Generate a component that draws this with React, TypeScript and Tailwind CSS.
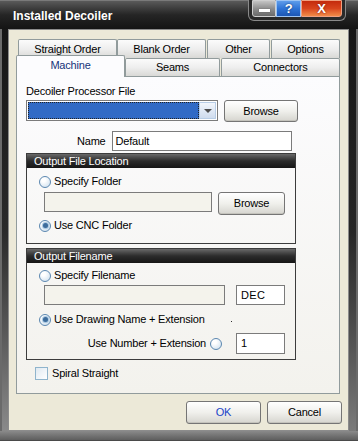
import React from "react";

function Radio({ checked = false }: { checked?: boolean }) {
  return (
    <span className="flex items-center justify-center w-[12px] h-[12px] shrink-0 rounded-full border border-[#5b87b0] bg-[radial-gradient(circle_at_35%_30%,#ffffff_20%,#c9dcec_100%)]">
      {checked && <span className="w-[5px] h-[5px] rounded-full bg-[#3d6c9c] shadow-[0_0_1px_1px_#9fc0dc]" />}
    </span>
  );
}

function Btn({ children, w, h, blue = false }: { children: React.ReactNode; w: string; h: string; blue?: boolean }) {
  return (
    <div
      className={`${w} ${h} shrink-0 flex items-center justify-center rounded-[3px] border border-[#757575] bg-linear-to-b from-[#ffffff] via-[#f0f0ec] to-[#d6d5cf] shadow-[inset_0_-1px_0_#c4c3bc] ${blue ? "text-[#1a44c8]" : "text-black"}`}
    >
      {children}
    </div>
  );
}

function Tab({ label, w, active = false }: { label: string; w: string; active?: boolean }) {
  if (active) {
    return (
      <div
        className={`${w} h-[22px] -mb-[1px] relative z-10 shrink-0 flex items-center justify-center rounded-t-[2px] border border-b-0 border-[#919b9c] bg-[#fcfcfe] text-[#15337a] pb-[2px]`}
      >
        {label}
      </div>
    );
  }
  return (
    <div
      className={`${w} h-full shrink-0 flex items-center justify-center rounded-t-[2px] border border-b-0 border-[#919b9c] bg-linear-to-b from-[#fbfbfb] via-[#eeeeee] to-[#d9d9d6] text-black`}
    >
      {label}
    </div>
  );
}

function Group({ title, h, children }: { title: string; h: string; children: React.ReactNode }) {
  return (
    <div className={`w-[270px] ${h} flex flex-col border border-[#3c3c3c]`}>
      <div className="h-[14px] shrink-0 flex items-center pl-[7px] text-white bg-linear-to-b from-[#6a6a6a] via-[#2c2c2c] to-[#161616] leading-none">
        {title}
      </div>
      {children}
    </div>
  );
}

export default function App() {
  return (
    <div className="w-[358px] h-[441px] flex flex-col overflow-hidden text-[11px] tracking-[-0.2px] font-['Liberation_Sans',Arial,sans-serif] select-none">
      {/* Title bar */}
      <div className="h-[29px] shrink-0 flex items-start bg-linear-to-b from-[#5a5a5a] via-[#252525] to-[#141414] border-t border-[#7a7a7a]">
        <div className="pl-[13px] pt-[8px] text-white font-bold text-[12px] tracking-normal leading-[15px]">
          Installed Decoiler
        </div>
        <div className="ml-auto mr-[12px] -mt-[1px] h-[21px] flex items-start px-[3px] rounded-b-[6px] bg-[#2a2a2a] border border-t-0 border-[#8a8a8a]">
          <div className="w-[24px] h-[17px] flex items-center justify-center rounded-bl-[3px] border border-[#cfcfcf] bg-linear-to-b from-[#c4c4c4] via-[#8e8e8e] to-[#6a6a6a]">
            <span className="w-[11px] h-[3px] bg-white mt-[4px] shadow-[0_0_1px_#333]" />
          </div>
          <div className="w-[25px] h-[17px] flex items-center justify-center border border-[#9cc4f4] bg-linear-to-b from-[#5e9cea] via-[#2f74d6] to-[#1c56b4] text-white font-bold text-[13px] leading-none [text-shadow:0_0_2px_#0a2a5a]">
            ?
          </div>
          <div className="w-[41px] h-[17px] flex items-center justify-center rounded-br-[3px] border border-[#f0a080] bg-linear-to-b from-[#c42a0c] via-[#d8441c] to-[#f08a48] text-white font-bold text-[13px] leading-none [text-shadow:0_0_2px_#6a1000]">
            X
          </div>
        </div>
      </div>

      {/* Middle */}
      <div className="h-[402px] shrink-0 flex">
        <div className="w-[8px] shrink-0 bg-linear-to-b from-[#161616] via-[#2a2a2a] to-[#8a8a8a] border-l-[2px] border-[#6a6a6a]" />
        {/* Client */}
        <div className="w-[341px] shrink-0 flex flex-col border border-[#8c8c8c] bg-[#ece9d8] pt-[9px]">
          {/* Tabs */}
          <div className="ml-[7px] w-[324px] flex flex-col">
            <div className="h-[19px] flex pl-[2px] gap-0">
              <Tab label="Straight Order" w="w-[99px]" />
              <Tab label="Blank Order" w="w-[89px]" />
              <div className="w-[1px]" />
              <Tab label="Other" w="w-[63px]" />
              <div className="w-[1px]" />
              <Tab label="Options" w="w-[69px]" />
            </div>
            <div className="h-[18px] flex items-end">
              <Tab label="Machine" w="w-[109px]" active />
              <Tab label="Seams" w="w-[95px]" />
              <div className="w-[1px]" />
              <Tab label="Connectors" w="w-[119px]" />
            </div>
          </div>

          {/* Panel */}
          <div className="ml-[7px] w-[324px] h-[318px] shrink-0 flex flex-col border border-[#919b9c] bg-linear-to-b from-[#fcfcfe] to-[#f3f2ed] pl-[9px] pt-[7px]">
            <div className="h-[14px] leading-[14px] text-black">Decoiler Processor File</div>
            <div className="mt-[2px] flex items-start">
              <div className="w-[192px] h-[21px] flex border border-[#7b7b7b] bg-white p-[1px]">
                <div className="flex-1 border border-dotted border-[#222] bg-[#316ac5]" />
                <div className="w-[17px] flex items-center justify-center border border-[#b8cde6] bg-linear-to-b from-[#f2f6fc] to-[#cfdcee]">
                  <span className="w-0 h-0 border-l-[4px] border-r-[4px] border-t-[4px] border-l-transparent border-r-transparent border-t-[#4d4d4d]" />
                </div>
              </div>
              <div className="ml-[6px]">
                <Btn w="w-[74px]" h="h-[22px]">Browse</Btn>
              </div>
            </div>

            <div className="mt-[9px] flex items-center h-[20px]">
              <span className="ml-[51px] text-black">Name</span>
              <div className="ml-[6px] w-[180px] h-[20px] flex items-center border border-[#7b7b7b] bg-white pl-[3px] text-black">
                Default
              </div>
            </div>

            <div className="mt-[2px]">
              <Group title="Output File Location" h="h-[91px]">
                <div className="mt-[7px] h-[13px] flex items-center pl-[12px] gap-[3px] text-black">
                  <Radio />
                  <span>Specify Folder</span>
                </div>
                <div className="mt-[4px] flex items-start pl-[17px]">
                  <div className="w-[168px] h-[20px] border border-[#7b7b7b] bg-[#f4f3ec]" />
                  <div className="ml-[6px]">
                    <Btn w="w-[67px]" h="h-[23px]">Browse</Btn>
                  </div>
                </div>
                <div className="mt-[4px] h-[13px] flex items-center pl-[12px] gap-[3px] text-black">
                  <Radio checked />
                  <span>Use CNC Folder</span>
                </div>
              </Group>
            </div>

            <div className="mt-[4px]">
              <Group title="Output Filename" h="h-[112px]">
                <div className="mt-[6px] h-[13px] flex items-center pl-[12px] gap-[3px] text-black">
                  <Radio />
                  <span>Specify Filename</span>
                </div>
                <div className="mt-[3px] flex items-start pl-[17px]">
                  <div className="w-[181px] h-[20px] border border-[#7b7b7b] bg-[#f4f3ec]" />
                  <div className="ml-[11px] w-[49px] h-[20px] flex items-center border border-[#7b7b7b] bg-white pl-[4px] text-black tracking-[0.3px]">
                    DEC
                  </div>
                </div>
                <div className="mt-[8px] h-[13px] flex items-center pl-[12px] gap-[3px] text-black">
                  <Radio checked />
                  <span>Use Drawing Name + Extension</span>
                  <span className="ml-auto mr-[63px] self-start mt-[8px] w-[1px] h-[1px] bg-[#303030]" />
                </div>
                <div className="mt-[7px] h-[21px] flex items-center justify-end pr-[10px] text-black">
                  <span>Use Number + Extension</span>
                  <span className="ml-[4px]">
                    <Radio />
                  </span>
                  <div className="ml-[14px] w-[49px] h-[21px] flex items-center border border-[#7b7b7b] bg-white pl-[4px]">
                    1
                  </div>
                </div>
              </Group>
            </div>

            <div className="mt-[7px] ml-[9px] flex items-center h-[13px] gap-[4px] text-black">
              <span className="w-[13px] h-[13px] border border-[#8fb4cc] bg-linear-to-br from-[#dfe9f1] to-[#ffffff]" />
              <span>Spiral Straight</span>
            </div>
          </div>

          {/* Buttons */}
          <div className="mt-[7px] flex justify-end gap-[6px] pr-[6px]">
            <Btn w="w-[75px]" h="h-[23px]" blue>
              OK
            </Btn>
            <Btn w="w-[75px]" h="h-[23px]">Cancel</Btn>
          </div>
        </div>
        <div className="w-[9px] shrink-0 bg-linear-to-b from-[#161616] via-[#262626] to-[#7a7a7a] border-r-[2px] border-[#6a6a6a]" />
      </div>

      {/* Bottom frame */}
      <div className="h-[10px] shrink-0 bg-linear-to-b from-[#8a8a8a] to-[#5e5e5e] border-b border-[#4a4a4a]" />
    </div>
  );
}
